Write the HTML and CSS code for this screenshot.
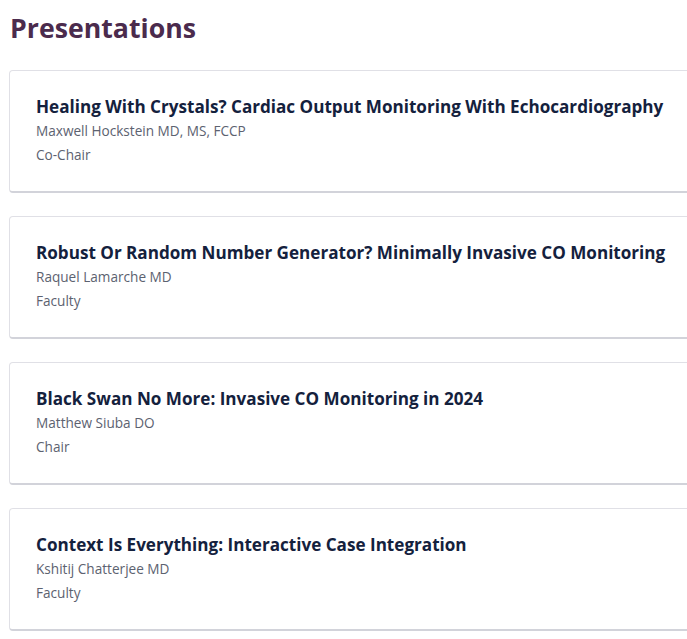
FILE: index.html
```html
<!DOCTYPE html>
<html lang="en">
<head>
<meta charset="utf-8">
<title>Presentations</title>
<link rel="stylesheet" href="styles.css">
</head>
<body>
<main class="page">
  <h1 class="heading">Presentations</h1>
  <ul class="list">
    <li class="card">
      <h2 class="card-title">Healing With Crystals? Cardiac Output Monitoring With Echocardiography</h2>
      <p class="card-meta">Maxwell Hockstein MD, MS, FCCP</p>
      <p class="card-meta">Co-Chair</p>
    </li>
    <li class="card">
      <h2 class="card-title">Robust Or Random Number Generator? Minimally Invasive CO Monitoring</h2>
      <p class="card-meta">Raquel Lamarche MD</p>
      <p class="card-meta">Faculty</p>
    </li>
    <li class="card">
      <h2 class="card-title">Black Swan No More: Invasive CO Monitoring in 2024</h2>
      <p class="card-meta">Matthew Siuba DO</p>
      <p class="card-meta">Chair</p>
    </li>
    <li class="card">
      <h2 class="card-title">Context Is Everything: Interactive Case Integration</h2>
      <p class="card-meta">Kshitij Chatterjee MD</p>
      <p class="card-meta">Faculty</p>
    </li>
  </ul>
</main>
</body>
</html>
```
FILE: styles.css
```css
html, body { overflow: hidden; }
body {
  margin: 0;
  background: #ffffff;
  font-family: "Open Sans", "Noto Sans", sans-serif;
}
.page {
  padding: 8px 0 0 9px;
  width: 720px;
}
.heading {
  margin: 0 0 0 1px;
  font-size: 26.7px;
  line-height: 40px;
  font-weight: 700;
  color: #4b2b4d;
}
.list {
  list-style: none;
  margin: 22px 0 0 0;
  padding: 0;
  display: flex;
  flex-direction: column;
  gap: 23px;
}
.card {
  box-sizing: border-box;
  height: 123px;
  padding: 24px 20px 0 26px;
  border: 1px solid #e0e0e6;
  border-bottom: 2px solid #d2d3da;
  border-radius: 4px;
  background: #fff;
}
.card-title {
  margin: 0;
  font-size: 17.1px;
  line-height: 24px;
  font-weight: 700;
  color: #14213d;
  white-space: nowrap;
}
.card-meta {
  margin: 0;
  font-size: 13.6px;
  line-height: 24px;
  color: #5c6270;
}
```
